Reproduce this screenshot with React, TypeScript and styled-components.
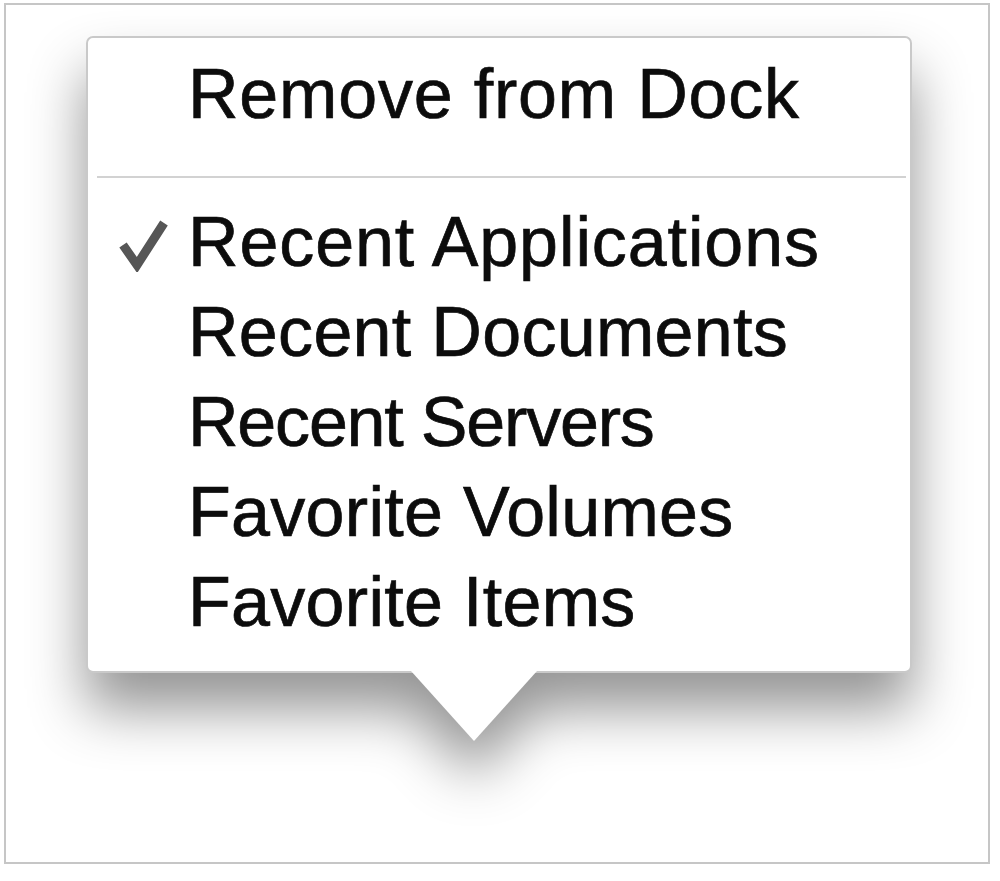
import React from "react";
import styled, { createGlobalStyle } from "styled-components";

const Global = createGlobalStyle`
  html, body { margin: 0; padding: 0; background: #ffffff; }
  #root { width: 1000px; height: 881px; }
`;

const Page = styled.div`
  width: 1000px;
  height: 881px;
  box-sizing: border-box;
  padding: 3px 10px 17px 4px;
  background: #ffffff;
  overflow: hidden;
  font-family: "Liberation Sans", Arial, sans-serif;
`;

const Frame = styled.div`
  height: 100%;
  box-sizing: border-box;
  border: 2px solid #c6c6c6;
  padding: 31px 0 0 80px;
`;

const Popover = styled.div`
  width: 826px;
  display: flex;
  flex-direction: column;
  align-items: center;
  filter: drop-shadow(0 36px 28px rgba(0, 0, 0, 0.42));
`;

const Menu = styled.div`
  width: 100%;
  box-sizing: border-box;
  background: #ffffff;
  border: 2px solid #c9c9c9;
  border-radius: 7px;
  padding: 11px 0 24px 0;
  display: flex;
  flex-direction: column;
`;

const Arrow = styled.div`
  width: 126px;
  height: 70px;
  margin-top: -2px;
  margin-left: -50px;
  background: #ffffff;
  clip-path: polygon(0 0, 100% 0, 50% 100%);
`;

const Item = styled.div<{ $spacing?: number }>`
  display: flex;
  align-items: center;
  height: 90px;
  line-height: 90px;
  font-size: 70px;
  color: #0c0c0c;
  -webkit-text-stroke: 0.7px #0c0c0c;
  letter-spacing: ${(p) => p.$spacing ?? 0.3}px;
  white-space: nowrap;
`;

const CheckCol = styled.span`
  width: 100px;
  flex: none;
  display: flex;
  align-items: center;
  padding-left: 29px;
  box-sizing: border-box;
`;

const Separator = styled.div`
  height: 2px;
  background: #d2d2d2;
  margin: 37px 4px 19px 9px;
`;

const Check = () => (
  <svg width="54" height="58" viewBox="0 0 54 58" style={{ marginTop: 2 }}>
    <path
      d="M6 31 L20 51 L47 9"
      fill="none"
      stroke="#565656"
      strokeWidth="9"
      strokeLinejoin="miter"
    />
  </svg>
);

const items: { label: string; checked?: boolean; spacing?: number }[] = [
  { label: "Recent Applications", checked: true, spacing: 0.9 },
  { label: "Recent Documents" },
  { label: "Recent Servers", spacing: -1.2 },
  { label: "Favorite Volumes" },
  { label: "Favorite Items" },
];

export default function App() {
  return (
    <>
      <Global />
      <Page>
        <Frame>
          <Popover>
            <Menu>
              <Item $spacing={0.8}>
                <CheckCol />
                Remove from Dock
              </Item>
              <Separator />
              {items.map((it) => (
                <Item key={it.label} $spacing={it.spacing}>
                  <CheckCol>{it.checked ? <Check /> : null}</CheckCol>
                  {it.label}
                </Item>
              ))}
            </Menu>
            <Arrow />
          </Popover>
        </Frame>
      </Page>
    </>
  );
}
